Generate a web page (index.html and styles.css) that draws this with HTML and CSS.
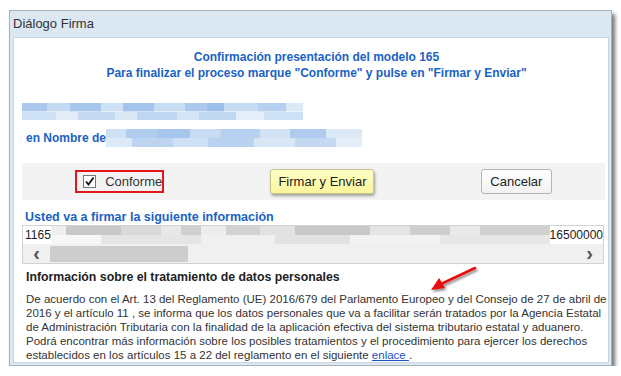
FILE: index.html
```html
<!DOCTYPE html>
<html lang="es">
<head>
    <meta charset="UTF-8">
    <title>Diálogo Firma</title>
    <link rel="stylesheet" href="styles.css">
</head>
<body>
    <div class="dialog">
        <div class="titlebar">Diálogo Firma</div>
        <div class="content">
            <div class="heading">
                Confirmación presentación del modelo 165<br>
                Para finalizar el proceso marque "Conforme" y pulse en "Firmar y Enviar"
            </div>

            <div class="blur blur-name"></div>

            <div class="nombre">
                <span class="label">en Nombre de</span>
                <span class="blur blur-nombre"></span>
            </div>

            <div class="actions">
                <label class="conforme">
                    <span class="check">
                        <svg width="11" height="11" viewBox="0 0 11 11"><path d="M2 5.5 L4.5 8.5 L9.5 1.5" fill="none" stroke="#111" stroke-width="1.8"/></svg>
                    </span>
                    Conforme
                </label>
                <button class="btn btn-firmar">Firmar y Enviar</button>
                <button class="btn btn-cancelar">Cancelar</button>
            </div>

            <div class="label sign-title">Usted va a firmar la siguiente información</div>
            <div class="sign-box">
                <div class="sign-row">
                    <span>1165</span>
                    <span class="blur blur-gray"></span>
                    <span>16500000</span>
                </div>
                <div class="scrollbar">
                    <span class="arrow">&#8249;</span>
                    <span class="track"><span class="thumb"></span></span>
                    <span class="arrow">&#8250;</span>
                </div>
            </div>

            <div class="info-title">Información sobre el tratamiento de datos personales</div>
            <p class="info">
                De acuerdo con el Art. 13 del Reglamento (UE) 2016/679 del Parlamento Europeo y del Consejo de 27 de abril de<br>
                2016 y el artículo 11 , se informa que los datos personales que va a facilitar serán tratados por la Agencia Estatal<br>
                de Administración Tributaria con la finalidad de la aplicación efectiva del sistema tributario estatal y aduanero.<br>
                Podrá encontrar más información sobre los posibles tratamientos y el procedimiento para ejercer los derechos<br>
                establecidos en los artículos 15 a 22 del reglamento en el siguiente <a href="#">enlace </a>.
            </p>

            <svg class="red-arrow" width="60" height="30" viewBox="0 0 60 30">
                <defs>
                    <filter id="sh" x="-20%" y="-20%" width="150%" height="160%">
                        <feDropShadow dx="1.5" dy="2" stdDeviation="1.2" flood-color="#000" flood-opacity="0.45"/>
                    </filter>
                </defs>
                <g filter="url(#sh)">
                    <line x1="48" y1="3" x2="14" y2="19" stroke="#e8100c" stroke-width="2.6" stroke-linecap="round"/>
                    <polygon points="4,25 12,13 18,23" fill="#e8100c"/>
                </g>
            </svg>
        </div>
    </div>
</body>
</html>
```

FILE: styles.css
```css
body {
    margin: 0;
    padding: 10px 0 0 9px;
    background: #fff;
    font-family: "Liberation Sans", Arial, sans-serif;
    font-size: 12px;
    color: #333;
}
.dialog {
    width: 601px;
    height: 354px;
    border: 1px solid #a9b0b6;
    background: #dbe7f1;
    box-shadow: 3px 4px 4px rgba(0,0,0,0.55);
    display: flex;
    flex-direction: column;
}
.titlebar {
    height: 26px;
    line-height: 25px;
    padding-left: 3px;
    font-size: 13px;
    color: #333;
}
.content {
    position: relative;
    flex: 1;
    margin: 0 2px 2px 3px;
    border: 1px solid #c9d5e0;
    background: #fff;
    padding: 11px 3px 0 8px;
}
.heading {
    text-align: center;
    font-weight: bold;
    color: #1a62c4;
    line-height: 16px;
    padding-left: 6px;
}
.label {
    font-weight: bold;
    color: #1a62c4;
}
.blur {
    display: block;
}
.blur-name {
    width: 281px;
    height: 17px;
    margin-top: 22px;
    background:
        linear-gradient(90deg, #a9c8ec 0 9%, #c4daf2 9% 17%, #a8c7ec 17% 28%, #cfe1f4 28% 36%, #a3c4eb 36% 47%, #c8dcf2 47% 58%, #acc9ed 58% 66%, #9cbfe9 66% 72%, #c6dbf2 72% 84%, #b6d0ef 84% 94%, #dbe8f6 94% 100%) top / 100% 50% no-repeat,
        linear-gradient(90deg, #cfe1f4 0 12%, #e3edf8 12% 20%, #c6dbf2 20% 33%, #dbe8f6 33% 41%, #bfd6f0 41% 55%, #d5e5f5 55% 63%, #c2d8f1 63% 76%, #e6eff9 76% 86%, #cde0f4 86% 100%) bottom / 100% 50% no-repeat;
}
.nombre {
    display: flex;
    align-items: center;
    margin-top: 9px;
    padding-left: 4px;
}
.blur-nombre {
    width: 256px;
    height: 18px;
    background:
        linear-gradient(90deg, #cfe1f4 0 8%, #b1cded 8% 20%, #a7c6ec 20% 33%, #c7dbf2 33% 45%, #b6d0ef 45% 60%, #d3e3f5 60% 72%, #b0cbee 72% 86%, #dbe8f6 86% 100%) top / 100% 50% no-repeat,
        linear-gradient(90deg, #dce9f6 0 10%, #bcd4ef 10% 26%, #cde0f4 26% 40%, #b9d2ef 40% 58%, #d8e6f6 58% 74%, #c4d9f1 74% 90%, #e4eef9 90% 100%) bottom / 100% 50% no-repeat;
}
.actions {
    display: flex;
    justify-content: space-around;
    align-items: center;
    height: 37px;
    margin-top: 16px;
    background: #f3f3f3;
}
.conforme {
    display: flex;
    align-items: center;
    gap: 9px;
    box-sizing: border-box;
    width: 89px;
    height: 23px;
    padding-left: 6px;
    border: 2px solid #e3161a;
    font-size: 13px;
    color: #333;
}
.check {
    display: flex;
    align-items: center;
    justify-content: center;
    width: 11px;
    height: 11px;
    border: 1px solid #777;
    background: #fff;
}
.btn {
    font-family: "Liberation Sans", Arial, sans-serif;
    font-size: 13px;
    color: #222;
    height: 25px;
    border-radius: 3px;
    padding: 0 6px;
    white-space: nowrap;
}
.btn-firmar {
    width: 104px;
    background: linear-gradient(#ffffc8, #fbf59a);
    border: 1px solid #c9c58e;
    box-shadow: 1px 2px 3px rgba(0,0,0,0.35);
}
.btn-cancelar {
    width: 71px;
    background: linear-gradient(#ffffff, #f1f1f1);
    border: 1px solid #b5b5b5;
}
.sign-title {
    margin-top: 9px;
    padding-left: 3px;
    font-size: 12.5px;
    line-height: 16px;
}
.sign-box {
    border: 1px solid #d2d2d2;
    margin-right: 1px;
}
.sign-row {
    display: flex;
    align-items: center;
    height: 18px;
    padding-left: 2px;
    color: #222;
    white-space: nowrap;
    overflow: hidden;
}
.blur-gray {
    flex: 1;
    height: 18px;
    background:
        linear-gradient(90deg, #eee 0 3%, #c9c9c9 3% 14%, #d9d9d9 14% 22%, #e8e8e8 22% 26%, #cfcfcf 26% 30%, #ececec 30% 35%, #d2d2d2 35% 42%, #e2e2e2 42% 49%, #c8c8c8 49% 64%, #e4e4e4 64% 72%, #cecece 72% 80%, #e9e9e9 80% 86%, #d0d0d0 86% 100%) top / 100% 50% no-repeat,
        linear-gradient(90deg, #f7f7f7 0 10%, #e5e5e5 10% 30%, #f0f0f0 30% 45%, #e2e2e2 45% 60%, #f2f2f2 60% 78%, #e7e7e7 78% 100%) bottom / 100% 50% no-repeat;
}
.scrollbar {
    display: flex;
    align-items: center;
    height: 19px;
    background: #f0f0f0;
}
.arrow {
    width: 27px;
    text-align: center;
    font-size: 20px;
    font-weight: bold;
    line-height: 17px;
    color: #555;
}
.track {
    flex: 1;
    height: 16px;
}
.thumb {
    display: block;
    width: 138px;
    height: 16px;
    background: #cdcdcd;
}
.info-title {
    margin-top: 5px;
    padding-left: 4px;
    font-weight: bold;
    font-size: 12.3px;
    line-height: 16px;
    color: #222;
}
.info {
    margin: 7px 0 0;
    padding-left: 4px;
    font-size: 11.5px;
    line-height: 14px;
    white-space: nowrap;
    color: #333;
}
.info a {
    color: #1a55c4;
}
.red-arrow {
    position: absolute;
    left: 413px;
    top: 227px;
}
```
